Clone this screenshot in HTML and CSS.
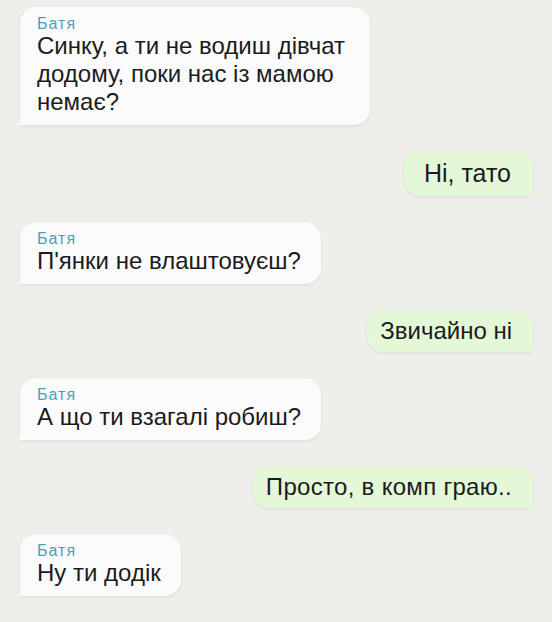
FILE: index.html
```html
<!DOCTYPE html>
<html lang="uk">
    <head>
        <meta charset="utf-8">
        <title>Батя</title>
        <link rel="stylesheet" href="styles.css">
    </head>
    <body>
        <div class="chat">
            <div class="msg in first">
                <div class="name">Батя</div>
                <div class="text">Синку, а ти не водиш дівчат<br>додому, поки нас із мамою<br>немає?</div>
            </div>
            <div class="msg out big">
                <div class="text">Ні, тато</div>
            </div>
            <div class="msg in">
                <div class="name">Батя</div>
                <div class="text">П'янки не влаштовуєш?</div>
            </div>
            <div class="msg out">
                <div class="text">Звичайно ні</div>
            </div>
            <div class="msg in">
                <div class="name">Батя</div>
                <div class="text">А що ти взагалі робиш?</div>
            </div>
            <div class="msg out">
                <div class="text wide">Просто, в комп граю..</div>
            </div>
            <div class="msg in">
                <div class="name">Батя</div>
                <div class="text">Ну ти додік</div>
            </div>
        </div>
    </body>
</html>
```

FILE: styles.css
```css
body {
    margin: 0;
    background: #efeeea;
    font-family: "Liberation Sans", Arial, sans-serif;
    color: #1b1b1b;
}
.chat {
    display: flex;
    flex-direction: column;
    gap: 26px;
    padding: 7px 19px 20px 20px;
}
.msg {
    position: relative;
    padding: 8px 20px 9px 17px;
    border-radius: 16px;
    box-shadow: 0 1px 3px rgba(0,0,0,0.09);
}
.msg.in {
    align-self: flex-start;
    background: #fbfbfc;
    border-bottom-left-radius: 4px;
}
.msg.first {
    padding-right: 25px;
}
.msg.out {
    align-self: flex-end;
    background: #e4f8d7;
    padding: 7px 21px 7px 13px;
    border-bottom-right-radius: 4px;
}
.msg.big {
    padding: 8px 22px 9px 20px;
}
.msg.big .text {
    font-size: 25px;
}
/* small tails under the bubbles */
.msg::after {
    content: "";
    position: absolute;
    bottom: 0;
    width: 10px;
    height: 10px;
}
.msg.in::after {
    left: -5px;
    background: radial-gradient(circle at 0 0, transparent 9px, #fbfbfc 10px);
}
.msg.out::after {
    right: -5px;
    background: radial-gradient(circle at 100% 0, transparent 9px, #e4f8d7 10px);
}
.name {
    font-size: 16px;
    line-height: 17px;
    letter-spacing: 1px;
    color: #4f9db4;
}
.text {
    font-size: 24px;
    line-height: 28px;
    white-space: nowrap;
}
.text.wide {
    letter-spacing: 0.3px;
}
```
